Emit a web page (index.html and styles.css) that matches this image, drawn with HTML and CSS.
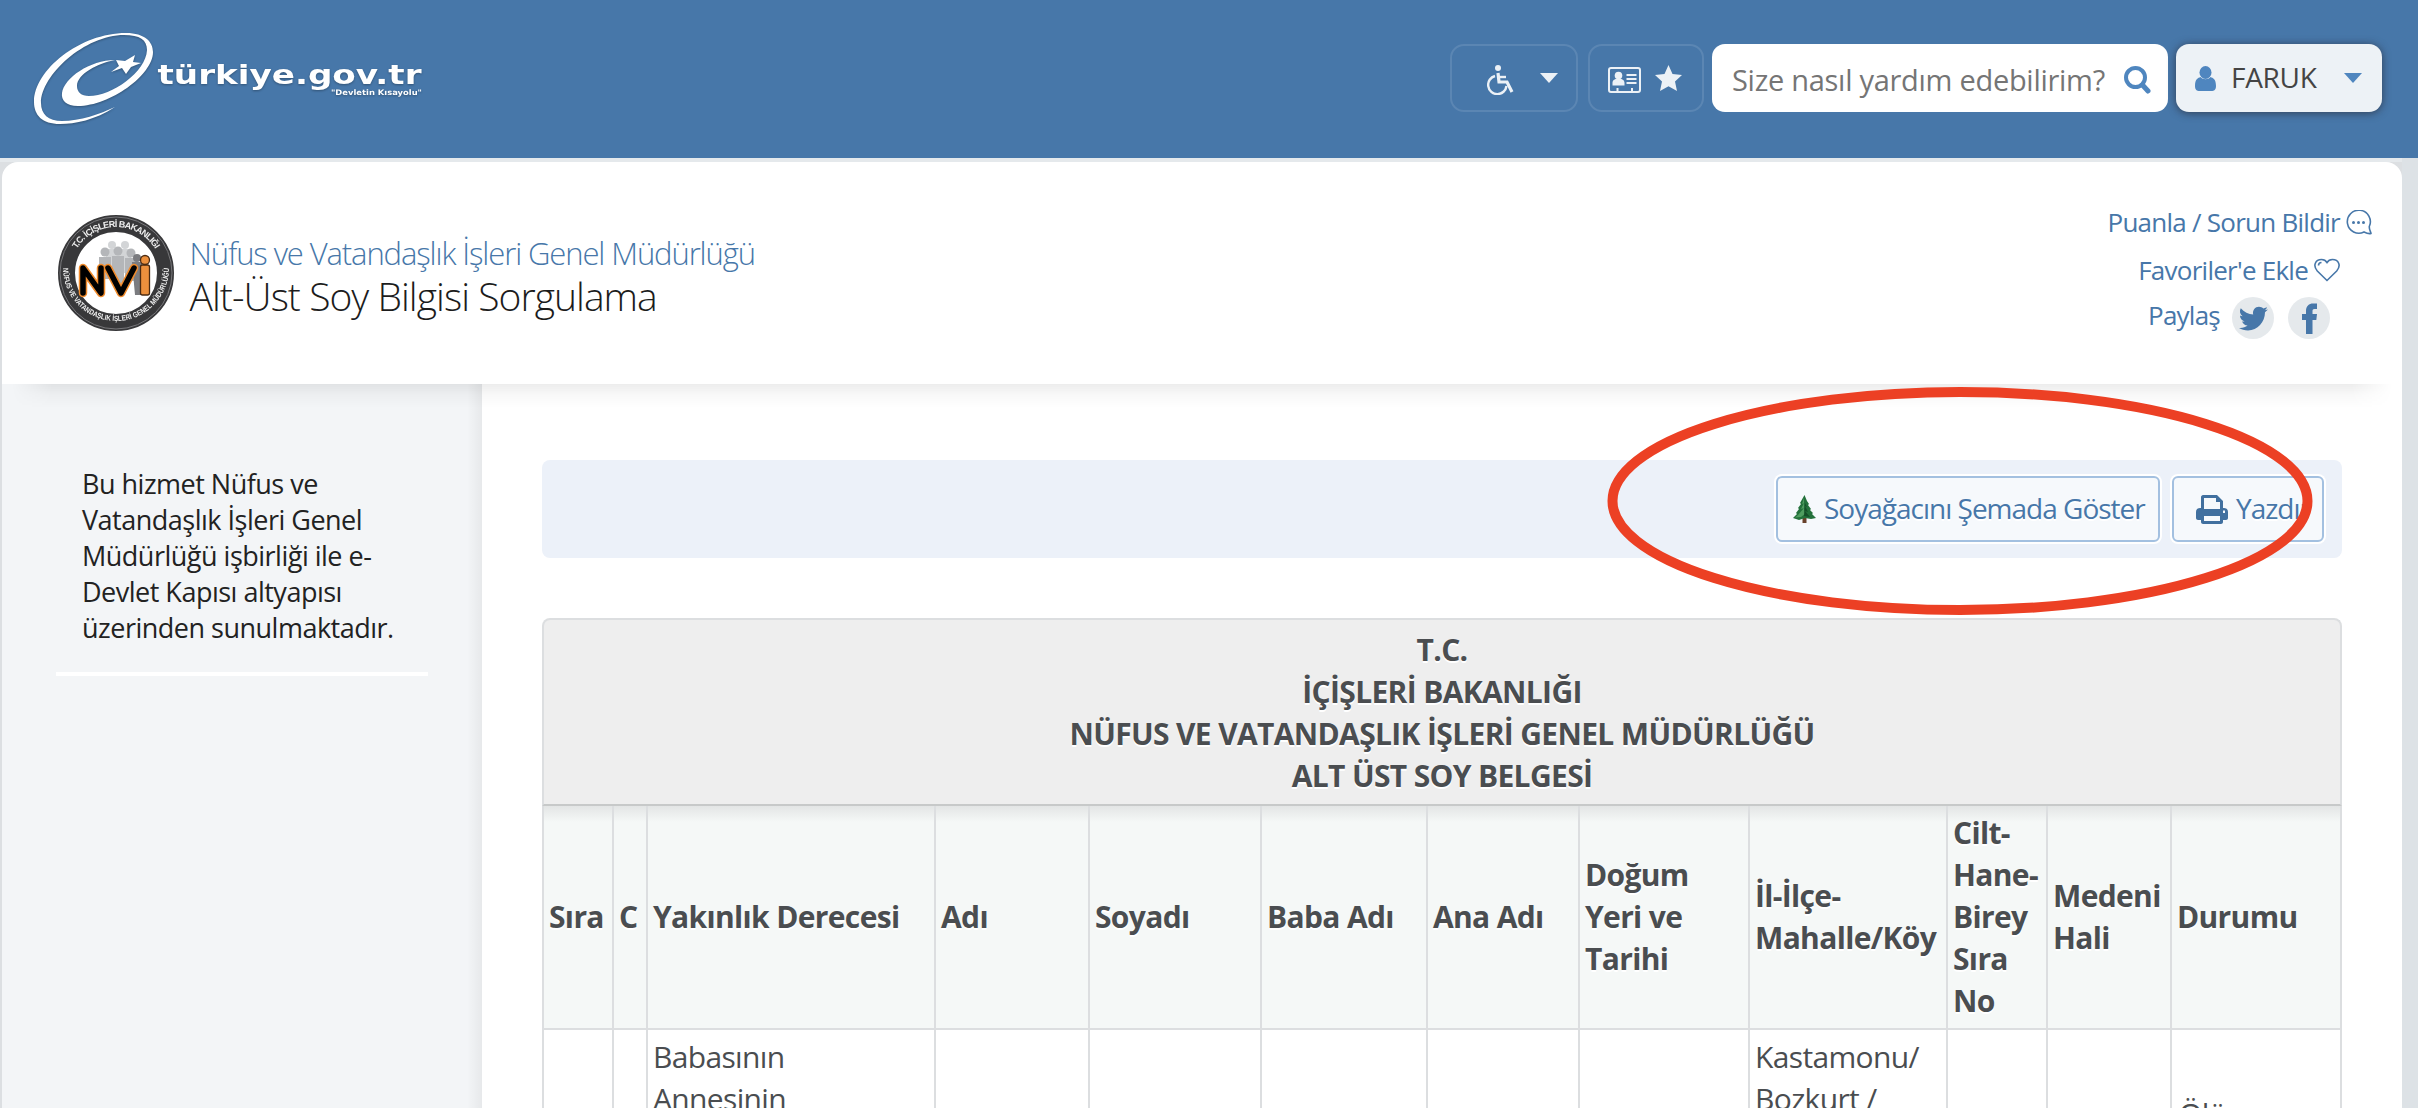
FILE: index.html
```html
<!DOCTYPE html>
<html lang="tr">
<head>
<meta charset="utf-8">
<title>Alt-Üst Soy Bilgisi Sorgulama</title>
<link rel="stylesheet" href="styles.css">
</head>
<body>
<header class="topbar">
  <svg class="brand" width="400" height="100" viewBox="30 28 400 100">
    <path d="M115 107C95 120 75 124 60 124C42 124 34 115 34 102C34 70 80 33 126 33C145 33 153 42 153 52C153 75 110 106 78 106C66 106 61 100 62 93C64 78 90 60 115 60C98 63 77 74 77 86C77 92 81 96 89 96C112 96 146 72 147 50C147 40 140 35 124 35C85 35 41 75 41 103C41 114 48 121 62 121C80 121 100 114 115 107Z"/>
    <path d="M135 55L133 62L141 63L131 67L126 74L122 68L111 72L119 66L116 60L125 61Z"/>
    <text class="brand-name" x="157.500" y="84" textLength="264" lengthAdjust="spacingAndGlyphs">türkiye.gov.tr</text>
    <text class="brand-tag" x="331" y="94.500" textLength="91" lengthAdjust="spacingAndGlyphs">"Devletin Kısayolu"</text>
  </svg>
  <div class="tools">
    <div class="tool access">
      <svg width="28" height="30" viewBox="0 0 28 30"><circle cx="11" cy="3" r="3"/><path class="line" d="M11 8L12 17H20L25 27" stroke-width="3.200"/><path class="line" d="M12 12H19" stroke-width="2.400"/><path class="line" d="M8 11A9.200 9.200 0 1 0 19.500 21" stroke-width="2.400"/></svg>
      <i class="caret"></i>
    </div>
    <div class="tool quick">
      <svg width="33" height="26" viewBox="0 0 33 26"><rect class="line" x="1" y="1" width="31" height="24" rx="2" stroke-width="2"/><circle cx="10.500" cy="8.500" r="3.800"/><path d="M4.500 18.500V16C4.500 13 7 11.500 10.500 11.500S16.500 13 16.500 16V18.500ZM8.500 21H10.500V24H8.500ZM23 21H25V24H23Z"/><path class="line" d="M18.500 8H28.500M18.500 12H28.500M18.500 16H28.500" stroke-width="2"/></svg>
      <svg width="27" height="27" viewBox="0 0 27 27"><path d="M13.500 0L17.500 9L27 10L20 16.500L22 26L13.500 21.200L5 26L7 16.500L0 10L9.500 9Z"/></svg>
    </div>
    <div class="search"><span>Size nasıl yardım edebilirim?</span>
      <svg width="27" height="28" viewBox="0 0 27 28"><circle cx="11.500" cy="11.500" r="9.500" fill="none" stroke="#4f86bf" stroke-width="4"/><path d="M18.500 19L24 25" stroke="#4f86bf" stroke-width="5" stroke-linecap="round"/></svg>
    </div>
    <div class="user">
      <svg width="21" height="25" viewBox="0 0 21 25"><ellipse cx="10.500" cy="6.500" rx="6" ry="6.500"/><path d="M0 20C0 13 3 12 5.500 11C8 14 13 14 15.500 11C18 12 21 13 21 20C21 24 19 25 16.500 25H4.500C2 25 0 24 0 20Z"/></svg>
      <span>FARUK</span><i class="caret blue"></i>
    </div>
  </div>
</header>
<main class="page">
  <section class="service">
    <svg class="seal" width="120" height="120" viewBox="-60 -60 120 120">
      <defs><path id="top" d="M-46 0A46 46 0 0 1 46 0"/><path id="low" d="M-53 -5A53 53 0 1 0 53 -5"/></defs>
      <circle r="49.500" fill="#fff" stroke="#38383a" stroke-width="17"/>
      <circle r="56" fill="none" stroke="#77777a" stroke-width="1"/>
      <text class="seal-text"><textPath href="#top" startOffset="50%" text-anchor="middle" textLength="94">T.C. İÇİŞLERİ BAKANLIĞI</textPath></text>
      <text class="seal-text small"><textPath href="#low" startOffset="50%" text-anchor="middle" textLength="166" lengthAdjust="spacingAndGlyphs">NÜFUS VE VATANDAŞLIK İŞLERİ GENEL MÜDÜRLÜĞÜ</textPath></text>
      <g fill="#d3d5d7"><circle cx="-4" cy="-28" r="4"/><circle cx="9" cy="-28" r="4"/><path d="M-10 -24H15V0H-10Z"/></g>
      <g fill="#b4b6b9"><circle cx="-11" cy="-21" r="4.500"/><circle cx="2" cy="-22" r="4.500"/><circle cx="15" cy="-20" r="4.500"/><path d="M-17 -16H-5V6H-17ZM-4 -17H8V10H-4ZM9 -15H21V8H9Z"/></g>
      <g fill="#7b7c80"><circle cx="21" cy="-15" r="4"/><path d="M16 -11H26V22H19Z"/></g>
      <g fill="none" stroke-linejoin="round" stroke-linecap="round"><path d="M-33 20V-5L-15 20V-5M-8 -5L5 20L18 -5" stroke="#ef8b2d" stroke-width="8.500"/><path d="M-33 20V-5L-15 20V-5M-8 -5L5 20L18 -5" stroke="#000" stroke-width="5.500"/></g>
      <g fill="#ec903d" stroke="#4b2b12" stroke-width="1.300"><rect x="24.500" y="-8" width="9" height="30" rx="2"/><circle cx="29" cy="-13" r="4.500"/></g>
    </svg>
    <div class="titles"><div class="agency">Nüfus ve Vatandaşlık İşleri Genel Müdürlüğü</div><h1>Alt-Üst Soy Bilgisi Sorgulama</h1></div>
    <div class="actions">
      <div class="action"><span>Puanla / Sorun Bildir</span>
        <svg width="26" height="25" viewBox="0 0 26 25"><path class="thin" d="M23.300 16.500A11.500 11.500 0 1 0 18 22C20 23 23 24 25 23.500C25 22 23 20 23.300 16.500Z"/><circle cx="7.500" cy="12.500" r="1.500"/><circle cx="12.500" cy="12.500" r="1.500"/><circle cx="17.500" cy="12.500" r="1.500"/></svg></div>
      <div class="action fav"><span>Favoriler'e Ekle</span>
        <svg width="26" height="24" viewBox="0 0 26 24"><path class="thin" d="M13 22.500L3.300 13C-1.500 7.500 1.500 1.500 7.500 1.500C10 1.500 12 2.800 13 4.500C14 2.800 16 1.500 18.500 1.500C24.500 1.500 27.500 7.500 22.700 13Z"/><path class="thin" d="M4.500 7.500C4.500 5.500 6 4.500 7.500 4.500"/></svg></div>
      <div class="action share"><span>Paylaş</span>
        <i class="round"><svg width="29" height="25" viewBox="0 0 29 25"><path d="M29 3.500L26 6.300C26 16 18.500 24.500 9 24.500C5.500 24.500 2.500 23.500 0 22C3.500 22.300 6.300 21.300 8.600 19.600C5.800 19.500 3.900 17.800 3.100 15.500C4 15.700 5 15.600 5.700 15.400C2.800 14.700 1 12.300 1 9.500C1.800 10 2.700 10.200 3.600 10.200C.9 8.200 .2 5 1.800 2.300C5 6 9.500 8.300 14.200 8.600C13.200 4.300 16.200 .8 20 .8C21.800 .8 23.300 1.500 24.400 2.600L28 1.200C27.600 2.500 26.800 3.400 25.600 4.200Z"/></svg></i>
        <i class="round"><svg width="15" height="31" viewBox="0 0 15 31"><path d="M4 31V17H0V11H4V8C4 3 7 .5 11 .5H15V6H12.500C11 6 10.500 6.700 10.500 8V11H15L14.300 17H10.500V31Z"/></svg></i></div>
    </div>
  </section>
  <div class="columns">
    <aside class="side"><p>Bu hizmet Nüfus ve<br>Vatandaşlık İşleri Genel<br>Müdürlüğü işbirliği ile e-<br>Devlet Kapısı altyapısı<br>üzerinden sunulmaktadır.</p></aside>
    <section class="content">
      <div class="toolbar">
        <div class="btn tree-btn"><svg width="23" height="28" viewBox="0 0 23 28"><path fill="#69422b" d="M9.500 21H13.500V28H9.500Z"/><path fill="#23713b" d="M11.500 0L14 6L16 9L15 10L18 14L17 15L20 18L19 19L23 23L18 24L12 23L6 25L0 23L4 19L3 18L6 14L5 13L8 9L7 8Z"/><path fill="#4f9d60" d="M11 3L9 9L11 8L8 14L11 13L5 20L2 22.500L8 22L12 19L11 15Z"/><path fill="#144f29" d="M12 8L14 12L12 11L15 17L12 16L17 22L11 21Z"/></svg><span>Soyağacını Şemada Göster</span></div>
        <div class="btn print-btn"><svg width="32" height="29" viewBox="0 0 32 29"><path fill="#41709f" fill-rule="evenodd" d="M5 13V2C5 1 6 0 7 0H21L27 6V13H28C30.500 13 32 14.500 32 17V23C32 24 31 25 30 25H27V27C27 28 26 29 25 29H7C6 29 5 28 5 27V25H2C1 25 0 24 0 23V17C0 14.500 1.500 13 4 13ZM8 3V14H24V7H20V3ZM8 21V26H24V21ZM27 15.500V18H29V15.500Z"/></svg><span>Yazdır</span></div>
      </div>
      <div class="record">
        <div class="caption">T.C.<br>İÇİŞLERİ BAKANLIĞI<br>NÜFUS VE VATANDAŞLIK İŞLERİ GENEL MÜDÜRLÜĞÜ<br>ALT ÜST SOY BELGESİ</div>
        <div class="row head">
          <div>Sıra</div><div>C</div><div>Yakınlık Derecesi</div><div>Adı</div><div>Soyadı</div><div>Baba Adı</div><div>Ana Adı</div><div>Doğum<br>Yeri ve<br>Tarihi</div><div>İl-İlçe-<br>Mahalle/Köy</div><div>Cilt-<br>Hane-<br>Birey<br>Sıra<br>No</div><div>Medeni<br>Hali</div><div>Durumu</div>
        </div>
        <div class="row data">
          <div></div><div></div><div>Babasının<br>Annesinin</div><div></div><div></div><div></div><div></div><div></div><div>Kastamonu/<br>Bozkurt /</div><div></div><div></div><div class="status">Ölü</div>
        </div>
      </div>
    </section>
  </div>
</main>
<svg class="marker" width="706" height="230" viewBox="0 0 706 230"><ellipse cx="353" cy="115" rx="347.500" ry="109"/></svg>
</body>
</html>
```
FILE: styles.css
```css
* { box-sizing: border-box; }
body {
  margin: 0;
  height: 1108px;
  overflow: hidden;
  background: #dde2e6;
  font-family: "Open Sans", "Noto Sans", sans-serif;
  color: #222;
}
svg { display: block; flex: none; }
span { white-space: nowrap; }

.topbar {
  height: 158px;
  padding: 28px 36px 0 30px;
  background: #4777a9;
  display: flex;
  justify-content: space-between;
}
.brand { fill: #fff; filter: drop-shadow(0 1px 1px rgba(0, 0, 0, .3)); }
.brand-name { font: bold 27px "DejaVu Sans", sans-serif; }
.brand-tag { font: bold 7.500px "DejaVu Sans", sans-serif; }
.tools { display: flex; padding-top: 16px; }
.tool {
  height: 68px;
  border: 2px solid #5b86b3;
  border-radius: 14px;
  display: flex;
  align-items: center;
  fill: #ecf1f6;
}
.tool .line { fill: none; stroke: #ecf1f6; }
.access { width: 128px; padding-left: 35px; gap: 25px; margin-right: 10px; }
.access svg { margin-top: 3px; }
.quick { width: 116px; padding-left: 18px; gap: 14px; margin-right: 8px; }
.quick svg:first-child { margin-top: 3px; }
.caret {
  border: solid transparent;
  border-width: 10px 9px 0;
  border-top-color: #ecf1f6;
}
.caret.blue { border-top-color: #4f86bf; }
.search, .user {
  height: 68px;
  border-radius: 13px;
  display: flex;
  align-items: center;
  background: #fff;
}
.search { width: 456px; padding: 3px 17px 0 20px; margin-right: 8px; justify-content: space-between; font-size: 29px; letter-spacing: -.28px; color: #757575; }
.user { width: 206px; padding: 0 20px 0 19px; background: #edf2f6; box-shadow: 0 1px 8px rgba(40, 40, 50, .7); font-size: 28px; letter-spacing: -.3px; color: #444; fill: #4f86bf; }
.user span { margin-left: 15px; width: 113px; padding-bottom: 2px; }

.page { width: 2402px; height: 950px; padding-left: 2px; background: #dcdfe2; border-top: 4px solid #e5e9ec; position: relative; }
.service {
  height: 222px;
  border-radius: 16px 16px 0 0;
  background: #fff;
  display: flex;
  position: relative;
  z-index: 1;
}
.service::after {
  content: "";
  position: absolute;
  left: 0;
  right: 0;
  top: 222px;
  height: 30px;
  background: linear-gradient(rgba(0, 0, 0, .07), rgba(0, 0, 0, .025) 40%, transparent 80%);
  mask-image: linear-gradient(90deg, transparent 10px, #000 50px, #000 calc(100% - 50px), transparent calc(100% - 10px));
}
.seal { margin: 51px 0 0 53.500px; filter: blur(.4px); }
.seal-text { font: bold 9px "Liberation Sans", sans-serif; fill: #eee; }
.seal-text.small { font-size: 7.500px; }
.titles { margin: 69px 0 0 14px; white-space: nowrap; }
.agency { font-size: 31px; letter-spacing: -1.1px; line-height: 44px; font-weight: 300; color: #4777a9; }
h1 { margin: 0; font-size: 39px; letter-spacing: -.95px; line-height: 42px; font-weight: 300; color: #1c1c1c; }
.actions { margin-left: auto; padding: 36px 30px 0 0; color: #4777a9; font-size: 26px; letter-spacing: -.75px; fill: #4777a9; }
.action { height: 48px; display: flex; align-items: center; justify-content: flex-end; gap: 6px; }
.action .thin { fill: none; stroke: #4777a9; stroke-width: 1.600; }
.fav { padding-right: 32px; }
.share { padding-right: 42px; gap: 14px; }
.share span { margin: -6px -2px 0 0; }
.round { width: 42px; height: 42px; border-radius: 50%; background: #e5e9ec; display: flex; align-items: center; justify-content: center; }

.columns { display: flex; height: 724px; }
.side {
  width: 480px;
  padding: 82px 54px 0;
  background: linear-gradient(90deg, transparent 465px, rgba(0, 0, 0, .05)) #f3f5f7;
}
.side p { margin: 0; padding: 0 0 25px 26px; border-bottom: 4px solid #fff; font-size: 27px; letter-spacing: -.5px; line-height: 36px; white-space: nowrap; height: 210px; }
.content { width: 1920px; padding: 76px 60px 0; background: #fff; }
.toolbar { height: 98px; border-radius: 8px; background: #ecf1f9; display: flex; justify-content: flex-end; gap: 12px; padding: 16px 18px; }
.btn {
  height: 66px;
  border: 2px solid #a3c0e0;
  border-radius: 6px;
  box-shadow: 0 0 0 2px #fff;
  background: #f6f9fc;
  color: #4777a9;
  font-size: 28px;
  letter-spacing: -1px;
  display: flex;
  align-items: center;
  text-shadow: 0 2px 0 #fff;
}
.btn span { padding-bottom: 2px; }
.tree-btn { width: 384px; padding-left: 15px; gap: 8px; }
.print-btn { width: 152px; padding-left: 22px; gap: 8px; }

.record { margin-top: 60px; width: 1800px; color: #4a4d50; font-size: 30px; letter-spacing: -.65px; line-height: 42px; }
.caption {
  height: 188px;
  padding-top: 9px;
  border: 2px solid #dcdee0;
  border-bottom-color: #c7c9c9;
  border-radius: 8px 8px 0 0;
  background: #eee;
  text-align: center;
  font-weight: 700;
  text-shadow: 0 2px 0 #fff;
}
.row {
  display: grid;
  grid-template-columns: 70px 34px 288px 154px 172px 166px 152px 170px 198px 100px 124px 172px;
  border-right: 2px solid #dcdee0;
}
.row > div { border-left: 2px solid #dcdee0; padding: 6px 0 6px 5px; white-space: nowrap; display: flex; align-items: center; }
.head { height: 224px; border-bottom: 2px solid #dcdee0; background: linear-gradient(#e3e5e5, #f5f8f7 16px); font-weight: 700; text-shadow: 0 2px 0 #fff; }
.data { height: 78px; background: #fff; }
.row.data > div { align-items: flex-start; }
.row.data > .status { padding: 63px 0 0 7px; }

.marker { position: absolute; left: 1607px; top: 386px; z-index: 5; fill: none; stroke: #ec4024; stroke-width: 10; }
```
